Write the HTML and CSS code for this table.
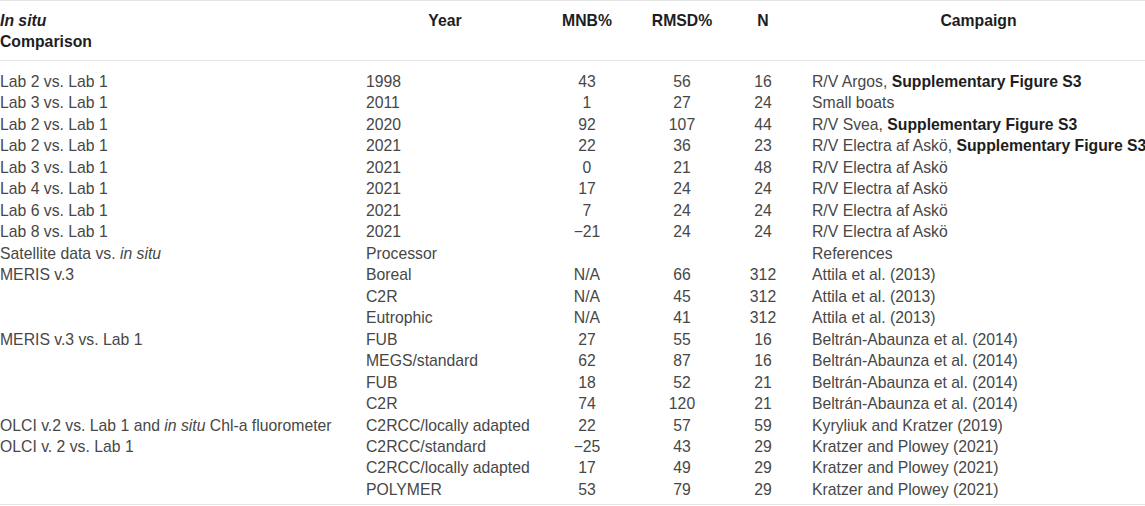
FILE: index.html
```html
<!DOCTYPE html>
<html lang="en">
<head>
    <meta charset="UTF-8">
    <meta name="viewport" content="width=device-width, initial-scale=1.0">
    <title>Validation table</title>
    <link rel="stylesheet" href="styles.css">
</head>
<body>

    <table class="data">
        <colgroup>
            <col class="c-comp">
            <col class="c-year">
            <col class="c-mnb">
            <col class="c-rmsd">
            <col class="c-n">
            <col class="c-camp">
        </colgroup>
        <thead>
            <tr>
                <th class="left"><i>In situ</i><br>Comparison</th>
                <th>Year</th>
                <th>MNB%</th>
                <th>RMSD%</th>
                <th>N</th>
                <th>Campaign</th>
            </tr>
        </thead>
        <tbody>
            <tr><td>Lab 2 vs. Lab 1</td><td>1998</td><td class="num">43</td><td class="num">56</td><td class="num">16</td><td>R/V Argos, <b>Supplementary Figure S3</b></td></tr>
            <tr><td>Lab 3 vs. Lab 1</td><td>2011</td><td class="num">1</td><td class="num">27</td><td class="num">24</td><td>Small boats</td></tr>
            <tr><td>Lab 2 vs. Lab 1</td><td>2020</td><td class="num">92</td><td class="num">107</td><td class="num">44</td><td>R/V Svea, <b>Supplementary Figure S3</b></td></tr>
            <tr><td>Lab 2 vs. Lab 1</td><td>2021</td><td class="num">22</td><td class="num">36</td><td class="num">23</td><td>R/V Electra af Askö, <b>Supplementary Figure S3</b></td></tr>
            <tr><td>Lab 3 vs. Lab 1</td><td>2021</td><td class="num">0</td><td class="num">21</td><td class="num">48</td><td>R/V Electra af Askö</td></tr>
            <tr><td>Lab 4 vs. Lab 1</td><td>2021</td><td class="num">17</td><td class="num">24</td><td class="num">24</td><td>R/V Electra af Askö</td></tr>
            <tr><td>Lab 6 vs. Lab 1</td><td>2021</td><td class="num">7</td><td class="num">24</td><td class="num">24</td><td>R/V Electra af Askö</td></tr>
            <tr><td>Lab 8 vs. Lab 1</td><td>2021</td><td class="num">−21</td><td class="num">24</td><td class="num">24</td><td>R/V Electra af Askö</td></tr>
            <tr><td>Satellite data vs. <i>in situ</i></td><td>Processor</td><td class="num"></td><td class="num"></td><td class="num"></td><td>References</td></tr>
            <tr><td>MERIS v.3</td><td>Boreal</td><td class="num">N/A</td><td class="num">66</td><td class="num">312</td><td>Attila et al. (2013)</td></tr>
            <tr><td></td><td>C2R</td><td class="num">N/A</td><td class="num">45</td><td class="num">312</td><td>Attila et al. (2013)</td></tr>
            <tr><td></td><td>Eutrophic</td><td class="num">N/A</td><td class="num">41</td><td class="num">312</td><td>Attila et al. (2013)</td></tr>
            <tr><td>MERIS v.3 vs. Lab 1</td><td>FUB</td><td class="num">27</td><td class="num">55</td><td class="num">16</td><td>Beltrán-Abaunza et al. (2014)</td></tr>
            <tr><td></td><td>MEGS/standard</td><td class="num">62</td><td class="num">87</td><td class="num">16</td><td>Beltrán-Abaunza et al. (2014)</td></tr>
            <tr><td></td><td>FUB</td><td class="num">18</td><td class="num">52</td><td class="num">21</td><td>Beltrán-Abaunza et al. (2014)</td></tr>
            <tr><td></td><td>C2R</td><td class="num">74</td><td class="num">120</td><td class="num">21</td><td>Beltrán-Abaunza et al. (2014)</td></tr>
            <tr><td>OLCI v.2 vs. Lab 1 and <i>in situ</i> Chl-a fluorometer</td><td>C2RCC/locally adapted</td><td class="num">22</td><td class="num">57</td><td class="num">59</td><td>Kyryliuk and Kratzer (2019)</td></tr>
            <tr><td>OLCI v. 2 vs. Lab 1</td><td>C2RCC/standard</td><td class="num">−25</td><td class="num">43</td><td class="num">29</td><td>Kratzer and Plowey (2021)</td></tr>
            <tr><td></td><td>C2RCC/locally adapted</td><td class="num">17</td><td class="num">49</td><td class="num">29</td><td>Kratzer and Plowey (2021)</td></tr>
            <tr><td></td><td>POLYMER</td><td class="num">53</td><td class="num">79</td><td class="num">29</td><td>Kratzer and Plowey (2021)</td></tr>
        </tbody>
    </table>

</body>
</html>
```

FILE: styles.css
```css
body {
    margin: 0;
    background: #fff;
    font-family: "Liberation Sans", Arial, sans-serif;
    font-size: 15.75px;
    color: #474747;
    overflow: hidden;
}
.data {
    width: 1145px;
    border-collapse: collapse;
    table-layout: fixed;
    border-top: 1px solid #e4e4e4;
    border-bottom: 1px solid #e4e4e4;
}
.c-comp { width: 366px; }
.c-year { width: 158px; }
.c-mnb { width: 126px; }
.c-rmsd { width: 64px; }
.c-n { width: 98px; }
.c-camp { width: 333px; }

.data th {
    font-weight: bold;
    color: #1e1e1e;
    text-align: center;
    vertical-align: top;
    line-height: 20.5px;
    padding: 10px 0 8px;
    white-space: nowrap;
}
.data th.left {
    text-align: left;
}
.data thead tr {
    border-bottom: 1px solid #e4e4e4;
}
.data td {
    padding: 0;
    line-height: 21.47px;
    white-space: nowrap;
    overflow: visible;
    text-align: left;
}
.data td.num {
    text-align: center;
}
.data td b {
    color: #1e1e1e;
}
.data tbody tr:first-child td {
    padding-top: 10px;
}
.data tbody tr:last-child td {
    padding-bottom: 4px;
}
```
